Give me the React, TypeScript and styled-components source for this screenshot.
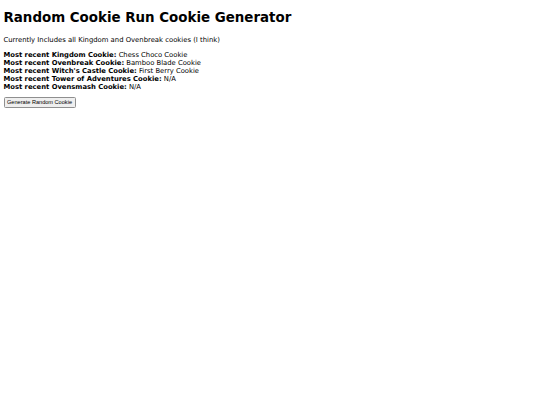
import React from "react";
import styled, { createGlobalStyle } from "styled-components";

const GlobalStyle = createGlobalStyle`
  html, body {
    margin: 0;
    background: #ffffff;
  }
  body {
    padding: 4px 3.5px;
    font-family: "DejaVu Sans", Verdana, sans-serif;
    color: #000000;
  }
`;

const Page = styled.main`
  display: flex;
  flex-direction: column;
  align-items: flex-start;
`;

const Title = styled.h1`
  font-size: 13.4px;
  font-weight: 700;
  margin: 6px 0 10px;
  line-height: 16px;
`;

const Intro = styled.p`
  font-size: 6.85px;
  margin: 0 0 7px;
  line-height: 8px;
`;

const RecentList = styled.div`
  display: flex;
  flex-direction: column;
  font-size: 6.8px;
  line-height: 8px;
  margin-bottom: 6px;
`;

const Label = styled.b`
  font-weight: 700;
`;

const GenerateButton = styled.button`
  font-family: "Liberation Sans", Arial, sans-serif;
  font-size: 5.6px;
  padding: 1px 2.5px;
  border: 1px solid #8f8f8f;
  border-radius: 1.5px;
  background: #efefef;
  color: #000;
  line-height: 6.5px;
`;

const recent = [
  ["Most recent Kingdom Cookie:", "Chess Choco Cookie"],
  ["Most recent Ovenbreak Cookie:", "Bamboo Blade Cookie"],
  ["Most recent Witch's Castle Cookie:", "First Berry Cookie"],
  ["Most recent Tower of Adventures Cookie:", "N/A"],
  ["Most recent Ovensmash Cookie:", "N/A"],
];

export default function App() {
  return (
    <>
      <GlobalStyle />
      <Page>
        <Title>Random Cookie Run Cookie Generator</Title>
        <Intro>Currently Includes all Kingdom and Ovenbreak cookies (I think)</Intro>
        <RecentList>
          {recent.map(([label, value]) => (
            <span key={label}>
              <Label>{label}</Label> {value}
            </span>
          ))}
        </RecentList>
        <GenerateButton>Generate Random Cookie</GenerateButton>
      </Page>
    </>
  );
}
